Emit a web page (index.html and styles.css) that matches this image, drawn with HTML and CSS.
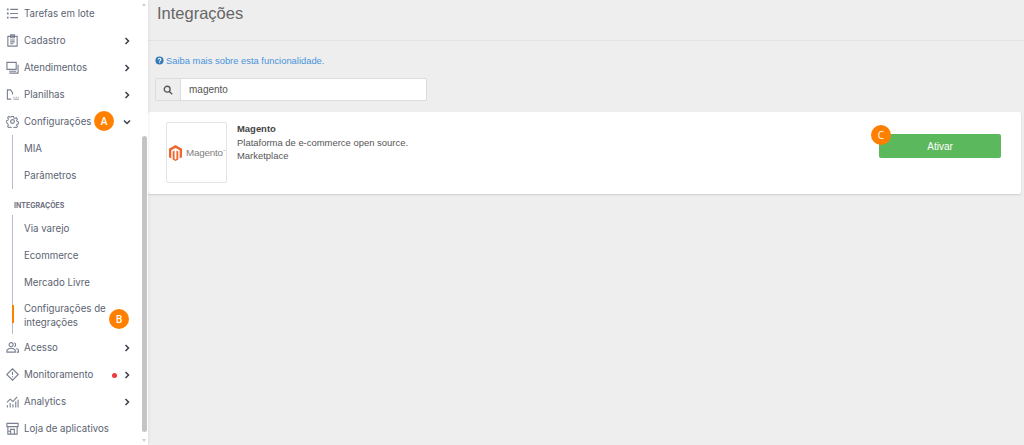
FILE: index.html
```html
<!DOCTYPE html>
<html lang="pt-BR">
<head>
<meta charset="utf-8">
<title>Integrações</title>
<link rel="stylesheet" href="styles.css">
</head>
<body>
<div class="app">
  <nav class="sidebar">
    <a class="row"><svg class="ico" viewBox="0 0 14 14"><path d="M4.500 2.500H13M4.500 7H13M4.500 11.500H13"/><path d="M1 2.500h1.800M1 7h1.800M1 11.500h1.800" stroke-width="2"/></svg><span class="label">Tarefas em lote</span></a>
    <a class="row"><svg class="ico" viewBox="0 0 14 14"><path d="M2 2.500h10v10.500H2zM5 1h4v3H5zM4.500 6.500h5M4.500 8.500h5M4.500 10.500h3.500"/></svg><span class="label">Cadastro</span><svg class="chev" viewBox="0 0 8 8"><path d="M2.500 1l3 3-3 3"/></svg></a>
    <a class="row"><svg class="ico" viewBox="0 0 14 14"><path d="M1 1.500h10v7.500H1zM3.500 11h7.500M13 4v9H3.500"/></svg><span class="label">Atendimentos</span><svg class="chev" viewBox="0 0 8 8"><path d="M2.500 1l3 3-3 3"/></svg></a>
    <a class="row"><svg class="ico" viewBox="0 0 14 14"><path d="M5.500 12H1.500V2H5l2 3v2"/><path d="M8 10h1.200M10.500 10h1.200M13 10h.8M8 12h5.800" stroke-width=".9"/></svg><span class="label">Planilhas</span><svg class="chev" viewBox="0 0 8 8"><path d="M2.500 1l3 3-3 3"/></svg></a>
    <a class="row"><svg class="ico" viewBox="0 0 14 14"><circle cx="7" cy="7" r="2"/><path d="M5.800 1h2.400l.4 1.700 1.300.6 1.500-.9 1.500 1.700-1 1.400.5 1.300 1.600.5v2.400l-1.600.5-.5 1.300 1 1.400-1.500 1.700-1.500-.9-1.300.6-.4 1.700H5.800l-.4-1.700-1.300-.6-1.500.9-1.500-1.700 1-1.400-.5-1.300L0 8.300V5.900l1.600-.5.5-1.300-1-1.400 1.500-1.700 1.500.9 1.300-.6z" transform="translate(.7 .7) scale(.9)"/></svg><span class="label">Configurações</span><svg class="chev" viewBox="0 0 8 8"><path d="M1 2.500l3 3 3-3"/></svg><span class="badge badge-a">A</span></a>
    <div class="sub">
      <a class="subrow">MIA</a>
      <a class="subrow">Parâmetros</a>
    </div>
    <div class="group-title">INTEGRAÇÕES</div>
    <div class="sub">
      <a class="subrow">Via varejo</a>
      <a class="subrow">Ecommerce</a>
      <a class="subrow">Mercado Livre</a>
      <a class="subrow two active">Configurações de integrações<span class="badge badge-b">B</span></a>
    </div>
    <a class="row"><svg class="ico" viewBox="0 0 14 14"><circle cx="5.500" cy="4" r="2.200"/><path d="M1 12V9.800c1-1.300 2.400-2 4.500-2s3.500.7 4.500 2V12zM9 2c1.500.2 2 3.500 0 4.200M11 8c1.200.3 2.200 1 2.500 1.800V12h-2"/></svg><span class="label">Acesso</span><svg class="chev" viewBox="0 0 8 8"><path d="M2.500 1l3 3-3 3"/></svg></a>
    <a class="row"><svg class="ico" viewBox="0 0 14 14"><path d="M7 .8L13.200 7 7 13.200.8 7zM7 4v3.500M7 9v1"/></svg><span class="label">Monitoramento</span><span class="dot"></span><svg class="chev" viewBox="0 0 8 8"><path d="M2.500 1l3 3-3 3"/></svg></a>
    <a class="row"><svg class="ico" viewBox="0 0 14 14"><path d="M1 8l3.500-3.500 3 2.500L12 2"/><path d="M1.500 11v2.500M4.500 8.500v5M7.500 10v3.500M10.500 7v6.500M13 5v8.500" stroke-width="1.200"/></svg><span class="label">Analytics</span><svg class="chev" viewBox="0 0 8 8"><path d="M2.500 1l3 3-3 3"/></svg></a>
    <a class="row"><svg class="ico" viewBox="0 0 14 14"><path d="M1 1.500h12v3.500H1zM2 5v8h10V5M5 13V8h4v5M2 10h3"/></svg><span class="label">Loja de aplicativos</span></a>
    <div class="scrollbar"><span class="arrow-up"></span><span class="thumb"></span><span class="arrow-down"></span></div>
  </nav>
  <main class="main">
    <header class="page-head"><h1>Integrações</h1></header>
    <section class="tools">
      <a class="help"><svg class="help-ico" viewBox="0 0 10 10"><circle cx="5" cy="5" r="4.500"/><path d="M3.500 3.900c.1-1 .8-1.400 1.600-1.400s1.500.5 1.500 1.300c0 1.200-1.500 1.100-1.500 2.200M5.100 7v.8"/></svg>Saiba mais sobre esta funcionalidade.</a>
      <div class="search">
        <span class="search-addon"><svg viewBox="0 0 12 12"><circle cx="5" cy="5" r="3.500"/><path d="M7.700 7.700L11 11"/></svg></span>
        <span class="search-input">magento</span>
      </div>
    </section>
    <article class="card">
      <div class="logo">
        <svg class="logo-mark" viewBox="0 0 14 17"><path d="M7 0L0 4v9l2.500 1.500V5.500L7 3l4.500 2.500v9L14 13V4zM6 5.800L4 7v8.500L7 17l3-1.500V7L8 5.800V15l-1 .6-1-.6z"/></svg>
        <span class="logo-text">Magento<sup>™</sup></span>
      </div>
      <div class="info">
        <strong>Magento</strong>
        <span>Plataforma de e-commerce open source.</span>
        <span>Marketplace</span>
      </div>
      <div class="action">
        <button class="btn">Ativar</button>
        <span class="badge badge-c">C</span>
      </div>
    </article>
  </main>
</div>
</body>
</html>
```
FILE: styles.css
```css
* { box-sizing: border-box; }
html, body { margin: 0; height: 445px; overflow: hidden; }
body { background: #eeeeee; font-family: "Liberation Sans", Arial, sans-serif; color: #555; }
.app { display: flex; height: 445px; }

.sidebar {
  position: relative;
  flex: 0 0 148px;
  background: #ffffff;
  font-family: Inter, "Open Sans", sans-serif;
  font-size: 9.700px;
  color: #5c6472;
  box-shadow: 1px 0 3px rgba(0,0,0,.06);
}
.row {
  position: relative;
  display: flex;
  align-items: center;
  height: 27px;
  padding-left: 6px;
}
.ico {
  flex: 0 0 13px;
  width: 13px;
  height: 13px;
  margin-right: 5px;
  fill: none;
  stroke: #7a8090;
  stroke-width: 1.200;
}
.label { white-space: nowrap; }
.chev {
  position: absolute;
  left: 123px;
  top: 10px;
  width: 8px;
  height: 8px;
  fill: none;
  stroke: #3a3f4a;
  stroke-width: 1.500;
}
.dot {
  position: absolute;
  left: 112px;
  top: 11.500px;
  width: 5px;
  height: 5px;
  border-radius: 50%;
  background: #f0363f;
}
.sub {
  margin-left: 12px;
  border-left: 1px solid #b9bccb;
  padding-left: 11px;
}
.subrow {
  position: relative;
  display: flex;
  align-items: center;
  height: 27px;
}
.subrow.two {
  display: block;
  height: 38px;
  padding-top: 6px;
  line-height: 14px;
  padding-right: 10px;
  white-space: normal;
  width: 105px;
}
.subrow.active::before {
  content: "";
  position: absolute;
  left: -12px;
  top: 9px;
  width: 2px;
  height: 18px;
  background: #ff8000;
}
.group-title {
  height: 26px;
  padding: 12px 0 0 14px;
  font-size: 7px;
  font-weight: 700;
  line-height: 10px;
  color: #6d7180;
}
.badge {
  position: absolute;
  width: 20px;
  height: 20px;
  border-radius: 50%;
  background: #ff8000;
  color: #fff;
  font-family: "Open Sans", sans-serif;
  font-size: 10px;
  font-weight: 600;
  line-height: 20px;
  text-align: center;
}
.badge-a { left: 94px; top: 3px; }
.badge-b { left: 85px; top: 13px; }

.scrollbar {
  position: absolute;
  top: 0;
  left: 142px;
  width: 5px;
  height: 445px;
}
.thumb {
  position: absolute;
  left: 0;
  top: 136px;
  width: 5px;
  height: 296px;
  border-radius: 3px;
  background: #c4c4c4;
}
.arrow-up, .arrow-down {
  position: absolute;
  left: 0;
  border-left: 2.500px solid transparent;
  border-right: 2.500px solid transparent;
}
.arrow-up { top: 3px; border-bottom: 3px solid #d0d0d0; }
.arrow-down { top: 439px; border-top: 3px solid #d0d0d0; }

.main { flex: 1; min-width: 0; }
.page-head {
  height: 41px;
  border-bottom: 1px solid #e3e3e3;
  padding: 3px 0 0 9px;
}
.page-head h1 {
  margin: 0;
  font-size: 16.500px;
  font-weight: 400;
  line-height: 21px;
  color: #666;
}
.tools { padding: 13px 0 0 7px; }
.help {
  display: flex;
  align-items: center;
  height: 12px;
  font-size: 9.400px;
  color: #4a94dc;
}
.help-ico { width: 9px; height: 9px; margin-right: 2px; fill: #337ab7; }
.help-ico path { fill: none; stroke: #fff; stroke-width: 1.200; }
.search {
  display: flex;
  width: 272px;
  height: 23px;
  margin-top: 12px;
  border: 1px solid #dcdcdc;
  border-radius: 2px;
  background: #fff;
}
.search-addon {
  display: flex;
  align-items: center;
  justify-content: center;
  width: 25px;
  background: #eeeeee;
  border-right: 1px solid #dcdcdc;
}
.search-addon svg { width: 10px; height: 10px; fill: none; stroke: #555; stroke-width: 1.600; }
.search-input {
  padding-left: 8px;
  font-size: 10px;
  line-height: 21px;
  color: #555;
}
.card {
  display: flex;
  width: 873px;
  height: 82px;
  margin-top: 11px;
  padding: 10px 0 0 18px;
  background: #fff;
  border-radius: 2px;
  box-shadow: 0 1px 2px rgba(0,0,0,.14);
}
.logo {
  display: flex;
  align-items: center;
  gap: 4px;
  width: 61px;
  height: 61px;
  padding-left: 2px;
  border: 1px solid #e4e4e4;
  border-radius: 2px;
}
.logo-mark { width: 13px; height: 16px; fill: #ee672f; }
.logo-text { font-size: 9.800px; color: #808080; letter-spacing: -.2px; }
.logo-text sup { font-size: 3px; }
.info {
  display: flex;
  flex-direction: column;
  margin-left: 10px;
  font-size: 9.450px;
  line-height: 13.500px;
  color: #555;
}
.info strong { color: #444; }
.action { position: relative; margin-left: auto; margin-right: 20px; padding-top: 12px; }
.badge-c { top: 3px; left: -8px; font-weight: 400; }
.btn {
  display: block;
  width: 122px;
  height: 24px;
  border: 0;
  border-radius: 2px;
  background: #5cb85c;
  color: #fff;
  font: 10px "Liberation Sans", Arial, sans-serif;
}
```
